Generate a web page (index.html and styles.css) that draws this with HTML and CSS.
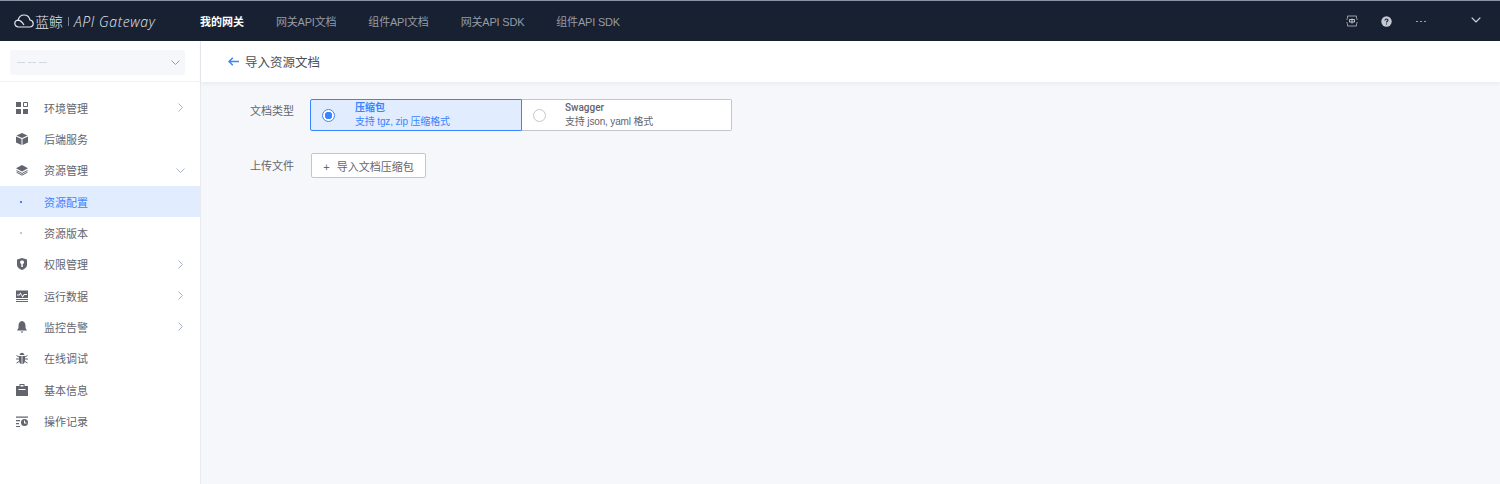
FILE: index.html
```html
<!DOCTYPE html>
<html lang="zh-CN">
<head>
  <meta charset="UTF-8">
  <title>API Gateway</title>
  <link rel="stylesheet" href="styles.css">
</head>
<body>
  <header class="topbar">
    <div class="logo">
      <svg class="logo-cloud" width="20" height="14" viewBox="0 0 20 14" fill="none" stroke="#e6e9ef" stroke-width="1.2"><path d="M5 13H4.500C2.500 13 .8 11.500 .8 9.600 .8 7.800 2.200 6.400 4 6.200 4.800 3 7.200 1 10 1c3 0 5.300 2 6 5 1.800.3 3.200 1.800 3.200 3.600 0 1.900-1.600 3.400-3.600 3.400H5zM4 6.200c2.800 0 4.500 2.500 6 4.800"/></svg>
      <span class="logo-cn">蓝鲸</span>
      <span class="logo-sep"></span>
      <span class="logo-en">API Gateway</span>
    </div>
    <nav class="topnav">
      <a class="active">我的网关</a>
      <a>网关API文档</a>
      <a>组件API文档</a>
      <a>网关API SDK</a>
      <a>组件API SDK</a>
    </nav>
    <div class="top-right">
      <svg width="12" height="12" viewBox="0 0 12 12" fill="none" stroke="#979ba5"><path d="M1.500 3.500V1h9v2.500M1.500 8.500V11h9V8.500M1 3.500V5M11 3.500V5M1 7v1.500M11 7v1.500"/><path d="M3.500 4.500h5v2.500h-5zM6 3.500v5" stroke="#c4c6cc"/></svg>
      <svg class="help" width="11" height="11" viewBox="0 0 11 11"><circle cx="5.500" cy="5.500" r="5.200" fill="#c4c9d3"/><path d="M4 4.400C4 3.500 4.700 3 5.500 3S7 3.500 7 4.300C7 5.300 5.500 5.300 5.500 6.500M5.500 7.500v1" fill="none" stroke="#182132" stroke-width="1.100"/></svg>
      <span class="user"><i></i><i></i><i></i></span>
      <svg class="user-arrow" width="10" height="6" viewBox="0 0 10 6" fill="none" stroke="#d7dae0" stroke-width="1.200"><path d="M.7.7 5 5 9.300.7"/></svg>
    </div>
  </header>

  <div class="layout">
    <aside class="sidebar">
      <div class="picker-wrap">
        <div class="picker">
          <span class="picker-value"><i></i><i></i><i></i></span>
          <svg width="9" height="5" viewBox="0 0 9 5" fill="none" stroke="#979ba5"><path d="M.5.500 4.500 4.500 8.500.5"/></svg>
        </div>
      </div>
      <ul class="menu">
        <li class="menu-item">
          <svg class="menu-icon" viewBox="0 0 12 12"><path d="M0 0h5v5H0zM0 7h5v5H0zM7 7h5v5H7z"/><path d="M7.500.5h4v4h-4z" fill="none" stroke="#63656e"/></svg>
          <span>环境管理</span>
          <svg class="arrow" width="5" height="9" viewBox="0 0 5 9"><path d="M.5.500 4.500 4.500.5 8.500"/></svg>
        </li>
        <li class="menu-item">
          <svg class="menu-icon" viewBox="0 0 12 12"><path d="M6 0 11.500 2.500 6 5 .5 2.500zM0 3.500 5.500 6v6L0 9.500zM12 3.500 6.500 6v6L12 9.500z"/></svg>
          <span>后端服务</span>
        </li>
        <li class="menu-item">
          <svg class="menu-icon" viewBox="0 0 12 12"><path d="M6 1 12 4.300 6 7.600 0 4.300z"/><path d="M.5 6.500 6 9.500l5.500-3M.5 8.200 6 11.200l5.500-3" fill="none" stroke="#63656e"/></svg>
          <span>资源管理</span>
          <svg class="arrow arrow-open" width="9" height="5" viewBox="0 0 9 5"><path d="M.5.500 4.500 4.500 8.500.5"/></svg>
        </li>
        <li class="menu-item sub active"><b class="dot"></b><span>资源配置</span></li>
        <li class="menu-item sub"><b class="dot"></b><span>资源版本</span></li>
        <li class="menu-item">
          <svg class="menu-icon" viewBox="0 0 12 12"><path fill-rule="evenodd" d="M6 0 11 1.500V7C11 9.500 8.500 11 6 12 3.500 11 1 9.500 1 7V1.500zM6 2.500A1.800 1.800 0 0 0 5.300 6V9H6.800V6A1.800 1.800 0 0 0 6 2.500z"/></svg>
          <span>权限管理</span>
          <svg class="arrow" width="5" height="9" viewBox="0 0 5 9"><path d="M.5.500 4.500 4.500.5 8.500"/></svg>
        </li>
        <li class="menu-item">
          <svg class="menu-icon" viewBox="0 0 12 12"><path fill-rule="evenodd" d="M0 .5h12V8H0zM1 4.500h2L4.500 2.500 6.500 6 8 4h3V5H8.500L6.500 7.500 4.500 4 3.500 5.500H1z"/><path d="M0 9h12v1H0zM0 11h12v1H0z"/></svg>
          <span>运行数据</span>
          <svg class="arrow" width="5" height="9" viewBox="0 0 5 9"><path d="M.5.500 4.500 4.500.5 8.500"/></svg>
        </li>
        <li class="menu-item">
          <svg class="menu-icon" viewBox="0 0 12 12"><path d="M6 0C3.800.5 2.500 2.300 2.500 4.500V7L1 9.500h10L9.500 7V4.500C9.500 2.300 8.200.5 6 0zM4.500 10.500h3L6 12z"/></svg>
          <span>监控告警</span>
          <svg class="arrow" width="5" height="9" viewBox="0 0 5 9"><path d="M.5.500 4.500 4.500.5 8.500"/></svg>
        </li>
        <li class="menu-item">
          <svg class="menu-icon" viewBox="0 0 12 12"><path d="M3.500 3C4 1.500 5 .8 6 .8S8 1.500 8.500 3zM3 4h2.600v8C4 11.800 3 10.500 3 8.500zM9 4H6.400v8C8 11.800 9 10.500 9 8.500z"/><path d="M0 7h3M9 7h3M.5 3.500 3 5M11.500 3.500 9 5M.5 11 3 9.500M11.500 11 9 9.500" stroke="#63656e" fill="none"/></svg>
          <span>在线调试</span>
        </li>
        <li class="menu-item">
          <svg class="menu-icon" viewBox="0 0 12 12"><path fill-rule="evenodd" d="M3.500 0h5v2H12v10H0V2h3.500zM4.500 1v1.500h3V1zM2.500 5v1h7V5z"/></svg>
          <span>基本信息</span>
        </li>
        <li class="menu-item">
          <svg class="menu-icon" viewBox="0 0 12 12"><path d="M0 1.500h12v1.200H0zM0 5h4v1.200H0zM0 8h3v1.200H0zM0 11h4v1H0z"/><path fill-rule="evenodd" d="M8.500 4a3.500 3.500 0 1 0 0 7 3.500 3.500 0 0 0 0-7zM8 5.500h1V7.500h1.500v1H8z"/></svg>
          <span>操作记录</span>
        </li>
      </ul>
    </aside>

    <main class="content">
      <div class="page-head">
        <svg width="11" height="9" viewBox="0 0 11 9" fill="none" stroke="#3a84ff" stroke-width="1.500"><path d="M11 4.500H1M4.800.7 1 4.500l3.800 3.800"/></svg>
        <span>导入资源文档</span>
      </div>
      <div class="form">
        <div class="form-row">
          <label>文档类型</label>
          <div class="cards">
            <div class="card selected">
              <span class="radio"></span>
              <div class="card-text">
                <strong>压缩包</strong>
                <em>支持 tgz, zip 压缩格式</em>
              </div>
            </div>
            <div class="card">
              <span class="radio"></span>
              <div class="card-text">
                <strong>Swagger</strong>
                <em>支持 json, yaml 格式</em>
              </div>
            </div>
          </div>
        </div>
        <div class="form-row upload-row">
          <label>上传文件</label>
          <button class="upload-btn"><span class="plus">+</span>导入文档压缩包</button>
        </div>
      </div>
    </main>
  </div>
</body>
</html>
```

FILE: styles.css
```css
* {
  box-sizing: border-box;
}
html, body {
  margin: 0;
  height: 100%;
}
body {
  font-family: "Liberation Sans", "Noto Sans CJK SC", sans-serif;
  font-size: 12px;
  color: #63656e;
  background: #f5f7fa;
  overflow: hidden;
}

/* top bar */
.topbar {
  height: 41px;
  background: #182132;
  border-top: 1px solid #8a93a5;
  display: flex;
  align-items: center;
  color: #979ba5;
}
.logo {
  width: 200px;
  padding-left: 14px;
  display: flex;
  align-items: center;
  color: #e6e9ef;
}
.logo-cloud {
  margin-right: 1px;
}
.logo-cn {
  font-size: 14px;
  font-weight: 300;
}
.logo-sep {
  width: 1px;
  height: 9px;
  background: #7a8090;
  margin: 0 5px;
}
.logo-en {
  font-family: "Open Sans", sans-serif;
  font-style: italic;
  font-weight: 300;
  font-size: 14px;
  letter-spacing: 0.6px;
}
.topnav {
  display: flex;
  gap: 32px;
}
.topnav a {
  font-size: 11px;
  white-space: nowrap;
  letter-spacing: -0.2px;
}
.topnav a.active {
  color: #fff;
  font-weight: bold;
  letter-spacing: 0;
}
.top-right {
  margin-left: auto;
  padding-right: 19px;
  display: flex;
  align-items: center;
}
.help {
  margin-left: 23px;
}
.user {
  width: 52px;
  margin-left: 24px;
  display: flex;
  gap: 2px;
  align-items: center;
}
.user i {
  width: 2px;
  height: 1px;
  background: #9ba1ad;
}
.user-arrow {
  margin: -2px 0 0 3px;
}

/* sidebar */
.layout {
  display: flex;
  height: 443px;
}
.sidebar {
  width: 201px;
  flex: none;
  background: #fff;
  border-right: 1px solid #e8eaf0;
}
.picker-wrap {
  height: 41px;
  padding: 9px 15px 0 10px;
  border-bottom: 1px solid #f0f1f5;
}
.picker {
  height: 25px;
  background: #f5f7fa;
  border-radius: 2px;
  display: flex;
  align-items: center;
  justify-content: space-between;
  padding: 0 5px 0 7px;
}
.picker-value {
  display: flex;
  gap: 3px;
}
.picker-value i {
  width: 8px;
  height: 1px;
  background: #d5d9e2;
}
.menu {
  list-style: none;
  margin: 0;
  padding: 10px 0 0;
}
.menu-item {
  height: 31.33px;
  display: flex;
  align-items: center;
  font-size: 11px;
  padding: 0 17px 0 16px;
  color: #63656e;
}
.menu-icon {
  width: 12px;
  height: 12px;
  fill: #63656e;
  margin-right: 16px;
  flex: none;
}
.arrow {
  margin-left: auto;
  fill: none;
  stroke: #a8b2c8;
}
.arrow-open {
  margin-right: -2px;
}
.dot {
  width: 2px;
  height: 2px;
  margin: 0 22px 0 4px;
  flex: none;
  background: #c4c6cc;
}
.sub.active {
  background: #e1ecff;
  color: #3a84ff;
}
.sub.active .dot {
  background: #3a84ff;
}

/* content */
.content {
  flex: 1;
}
.page-head {
  height: 41px;
  background: #fff;
  box-shadow: 0 2px 4px rgba(25, 25, 41, 0.05);
  padding-left: 27px;
  display: flex;
  align-items: center;
  gap: 6px;
  font-size: 12.5px;
  color: #4d4f56;
}
.form {
  padding-top: 17px;
}
.form-row {
  display: flex;
  align-items: flex-start;
}
.form-row label {
  width: 109px;
  padding: 3px 0 0 49px;
  font-size: 11px;
  flex: none;
}
.cards {
  display: flex;
}
.card {
  width: 210px;
  height: 32px;
  background: #fff;
  border: 1px solid #c4c6cc;
  border-left: 0;
  border-radius: 0 2px 2px 0;
  display: flex;
  align-items: center;
  padding-left: 11px;
}
.card.selected {
  width: 212px;
  background: #e1ecff;
  border: 1px solid #3a84ff;
  border-radius: 2px 0 0 2px;
  color: #3a84ff;
}
.radio {
  width: 13px;
  height: 13px;
  border: 1px solid #c4c6cc;
  border-radius: 50%;
  background: #fff;
  flex: none;
  margin-right: 19px;
}
.card.selected .radio {
  border-color: #3a84ff;
  margin-right: 20px;
  background: radial-gradient(circle, #3a84ff 0 3.500px, #fff 4px);
}
.card-text {
  display: flex;
  flex-direction: column;
  line-height: 14px;
  font-size: 10px;
  letter-spacing: -0.15px;
}
.card-text strong {
  font-family: Roboto, "Noto Sans CJK SC", sans-serif;
  font-weight: 500;
  color: #63656e;
  letter-spacing: 0;
}
.card.selected .card-text strong {
  color: #3a84ff;
  font-weight: bold;
}
.card-text em {
  font-style: normal;
}
.upload-row {
  margin-top: 22px;
}
.upload-row label {
  padding-top: 4px;
}
.upload-btn {
  width: 115px;
  height: 25px;
  margin-left: 1px;
  background: #fff;
  border: 1px solid #c4c6cc;
  border-radius: 2px;
  font-family: inherit;
  font-size: 11px;
  color: #63656e;
  padding: 0;
}
.plus {
  margin-right: 7px;
}
```
